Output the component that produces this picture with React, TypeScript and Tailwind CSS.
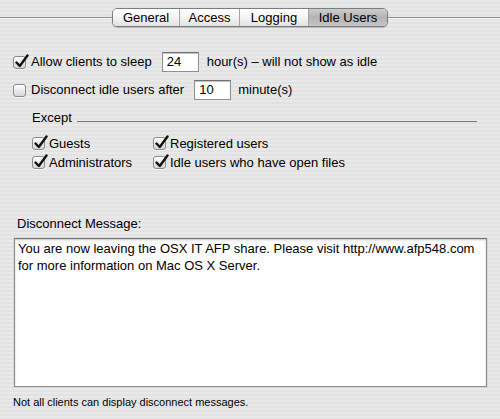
import React from 'react';

const font = { fontFamily: '"Liberation Sans", Arial, sans-serif' };

const Check = ({ checked }: { checked: boolean }) => (
  <span className="relative inline-block w-[13px] h-[13px] shrink-0 rounded-[3px] border border-[#8a8a8a] bg-linear-to-b from-white to-[#d6d6d6] shadow-[0_1px_0_rgba(255,255,255,0.6)]">
    {checked && (
      <svg
        className="absolute left-[1px] top-[-3px]"
        width="14"
        height="15"
        viewBox="0 0 14 15"
      >
        <path
          d="M1.5 8.5 L4.8 12 L12.5 1.5"
          fill="none"
          stroke="#111"
          strokeWidth="2.4"
          strokeLinecap="round"
          strokeLinejoin="round"
        />
      </svg>
    )}
  </span>
);

const Field = ({ value }: { value: string }) => (
  <div className="w-[37px] h-[20px] bg-white border border-[#8f8f8f] border-t-[#6f6f6f] shadow-[inset_0_1px_1px_rgba(0,0,0,0.25)] pl-[4px] text-[13px] leading-[18px] text-black">
    {value}
  </div>
);

const tabs = [
  { label: 'General', w: 'w-[66px]' },
  { label: 'Access', w: 'w-[60px]' },
  { label: 'Logging', w: 'w-[69px]' },
  { label: 'Idle Users', w: 'w-[79px]' },
];

export default function App() {
  return (
    <div
      style={font}
      className="w-[500px] h-[419px] overflow-hidden text-[13px] text-black bg-[repeating-linear-gradient(to_bottom,#e9e9e9_0px,#e9e9e9_2px,#e2e2e2_2px,#e2e2e2_4px)]"
    >
      {/* tab strip */}
      <div className="flex items-center pt-[8px]">
        <div className="flex-1 h-px bg-[#8c8c8c] shadow-[0_1px_0_#f6f6f6]" />
        <div className="flex h-[19px] border border-[#7c7c7c] rounded-[5px] overflow-hidden shadow-[0_1px_1px_rgba(0,0,0,0.2)]">
          {tabs.map((t, i) => (
            <div
              key={t.label}
              className={`${t.w} flex items-center justify-center leading-[17px] ${i > 0 ? 'border-l border-[#a4a4a4]' : ''} ${
                i === 3
                  ? 'bg-linear-to-b from-[#cdcdcd] via-[#b3b3b3] to-[#c6c6c6]'
                  : 'bg-linear-to-b from-white via-[#f4f4f4] to-[#e2e2e2]'
              }`}
            >
              {t.label}
            </div>
          ))}
        </div>
        <div className="flex-1 h-px bg-[#8c8c8c] shadow-[0_1px_0_#f6f6f6]" />
      </div>

      {/* sleep / disconnect rows */}
      <div className="mt-[25px] pl-[13px] flex items-center h-[20px]">
        <Check checked />
        <span className="ml-[5px]">Allow clients to sleep</span>
        <div className="ml-[10px]">
          <Field value="24" />
        </div>
        <span className="ml-[8px]">hour(s) – will not show as idle</span>
      </div>
      <div className="mt-[8px] pl-[13px] flex items-center h-[20px]">
        <Check checked={false} />
        <span className="ml-[5px]">Disconnect idle users after</span>
        <div className="ml-[10px]">
          <Field value="10" />
        </div>
        <span className="ml-[7px]">minute(s)</span>
      </div>

      {/* except group */}
      <div className="mt-[10px] pl-[32px] pr-[23px] flex items-end h-[15px]">
        <span className="leading-[15px]">Except</span>
        <div className="flex-1 ml-[5px] mb-[3px] h-px bg-[#7a7a7a]" />
      </div>
      <div className="mt-[12px] pl-[32px] grid grid-cols-[121px_1fr] gap-y-[6px]">
        <div className="flex items-center h-[13px]">
          <Check checked />
          <span className="ml-[4px]">Guests</span>
        </div>
        <div className="flex items-center h-[13px]">
          <Check checked />
          <span className="ml-[4px]">Registered users</span>
        </div>
        <div className="flex items-center h-[13px]">
          <Check checked />
          <span className="ml-[4px]">Administrators</span>
        </div>
        <div className="flex items-center h-[13px]">
          <Check checked />
          <span className="ml-[4px]">Idle users who have open files</span>
        </div>
      </div>

      {/* message */}
      <div className="mt-[47px] pl-[17px] leading-[15px]">Disconnect Message:</div>
      <div className="mt-[7px] ml-[14px] w-[473px] h-[149px] bg-white border border-[#8e8e8e] border-t-[#777] shadow-[inset_0_1px_2px_rgba(0,0,0,0.25),0_0_0_1px_rgba(0,0,0,0.06)] pl-[3px] pt-[1px] leading-[17px] whitespace-nowrap">
        You are now leaving the OSX IT AFP share. Please visit http://www.afp548.com
        <br />
        for more information on Mac OS X Server.
      </div>
      <div className="mt-[8px] pl-[13px] text-[11px] leading-[14px]">
        Not all clients can display disconnect messages.
      </div>
    </div>
  );
}
